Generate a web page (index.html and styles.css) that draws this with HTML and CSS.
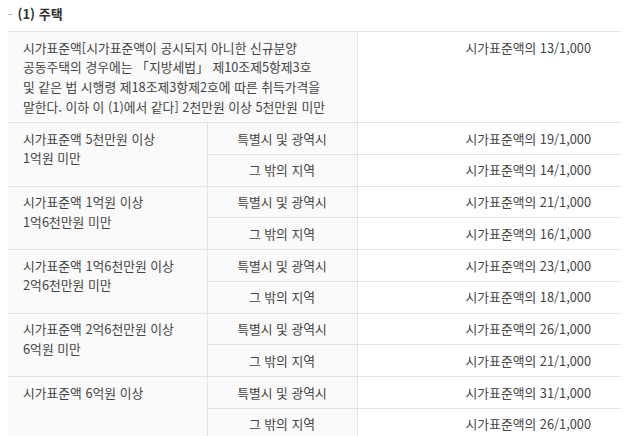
FILE: index.html
```html
<!DOCTYPE html>
<html lang="ko">
<head>
<meta charset="utf-8">
<link rel="stylesheet" href="styles.css">
</head>
<body>
<div class="section">
  <h4 class="title"><span class="dash">-</span>(1) 주택</h4>
  <table class="tax">
    <colgroup><col class="c1"><col class="c2"><col class="c3"></colgroup>
    <tbody>
      <tr>
        <th colspan="2" class="cond">시가표준액[시가표준액이 공시되지 아니한 신규분양<br>공동주택의 경우에는 「지방세법」 제10조제5항제3호<br>및 같은 법 시행령 제18조제3항제2호에 따른 취득가격을<br>말한다. 이하 이 (1)에서 같다] 2천만원 이상 5천만원 미만</th>
        <td class="rate">시가표준액의 13/1,000</td>
      </tr>
      <tr>
        <th rowspan="2" class="cond">시가표준액 5천만원 이상<br>1억원 미만</th>
        <th class="area">특별시 및 광역시</th>
        <td class="rate">시가표준액의 19/1,000</td>
      </tr>
      <tr>
        <th class="area">그 밖의 지역</th>
        <td class="rate">시가표준액의 14/1,000</td>
      </tr>
      <tr>
        <th rowspan="2" class="cond">시가표준액 1억원 이상<br>1억6천만원 미만</th>
        <th class="area">특별시 및 광역시</th>
        <td class="rate">시가표준액의 21/1,000</td>
      </tr>
      <tr>
        <th class="area">그 밖의 지역</th>
        <td class="rate">시가표준액의 16/1,000</td>
      </tr>
      <tr>
        <th rowspan="2" class="cond">시가표준액 1억6천만원 이상<br>2억6천만원 미만</th>
        <th class="area">특별시 및 광역시</th>
        <td class="rate">시가표준액의 23/1,000</td>
      </tr>
      <tr>
        <th class="area">그 밖의 지역</th>
        <td class="rate">시가표준액의 18/1,000</td>
      </tr>
      <tr>
        <th rowspan="2" class="cond">시가표준액 2억6천만원 이상<br>6억원 미만</th>
        <th class="area">특별시 및 광역시</th>
        <td class="rate">시가표준액의 26/1,000</td>
      </tr>
      <tr>
        <th class="area">그 밖의 지역</th>
        <td class="rate">시가표준액의 21/1,000</td>
      </tr>
      <tr>
        <th rowspan="2" class="cond">시가표준액 6억원 이상</th>
        <th class="area">특별시 및 광역시</th>
        <td class="rate">시가표준액의 31/1,000</td>
      </tr>
      <tr>
        <th class="area">그 밖의 지역</th>
        <td class="rate">시가표준액의 26/1,000</td>
      </tr>
    </tbody>
  </table>
</div>
</body>
</html>
```

FILE: styles.css
```css
html, body {
  margin: 0;
  padding: 0;
  background: #fff;
}
body {
  padding: 0 4px 0 8px;
  font-family: "Noto Sans CJK KR", "Noto Sans", sans-serif;
  color: #444;
  font-size: 12.8px;
}
.title {
  margin: 0;
  padding: 4px 0 0 0;
  height: 27px;
  font-size: 13px;
  font-weight: bold;
  color: #333;
  line-height: 20px;
}
.dash {
  color: #aaa;
  font-weight: normal;
  margin-right: 5px;
}
.tax {
  width: 613px;
  border-collapse: collapse;
  border-top: 1px solid #e3e3e3;
  table-layout: fixed;
}
.c1 { width: 199px; }
.c2 { width: 150px; }
.c3 { width: 264px; }
.tax th, .tax td {
  font-weight: normal;
  line-height: 19.75px;
  padding: 5.5px 0;
  border-bottom: 1px solid #e3e3e3;
  vertical-align: top;
  white-space: nowrap;
}
.tax th {
  background: #fafafa;
  border-right: 1px solid #e3e3e3;
}
.cond {
  text-align: left;
  padding-left: 15px !important;
}
.area {
  text-align: center;
}
.rate {
  text-align: right;
  padding-right: 30px !important;
  background: #fff;
}
```
